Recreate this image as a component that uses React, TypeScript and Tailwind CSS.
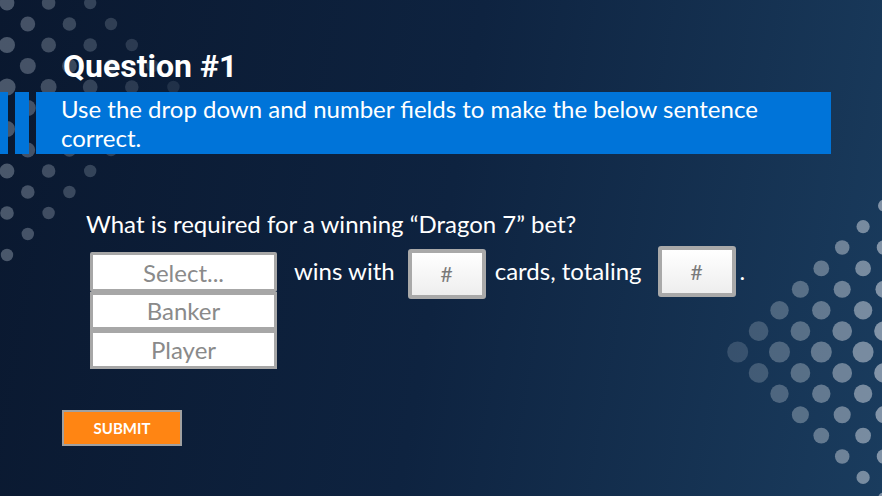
import React from "react";

type Dot = { x: number; y: number; r: number; o: number };

// left cluster: diamond hugging the left edge
const leftDots: Dot[] = [];
for (let i = 0; i <= 8; i++) {
  for (let j = -8; j <= 8; j++) {
    if (i + Math.abs(j) > 8 || (i + j) % 2 !== 0) continue;
    leftDots.push({
      x: 7 + 20.8 * i,
      y: 87 + 21 * j,
      r: 8.6 - 0.3 * (i + Math.abs(j)),
      o: 0.42 - 0.035 * i,
    });
  }
}

// right cluster: diamond pointing left, brighter towards the edge
const rightDots: Dot[] = [];
for (let i = 0; i <= 7; i++) {
  for (let j = -7; j <= 7; j++) {
    if (i + Math.abs(j) > 7 || Math.abs(i + j) % 2 !== 1) continue;
    rightDots.push({
      x: 884 - 20.9 * i,
      y: 352 + 20.9 * j,
      r: 10.5 - 0.65 * Math.abs(j),
      o: 0.62 - 0.06 * i,
    });
  }
}

function Dots() {
  return (
    <svg className="absolute inset-0 pointer-events-none" width="882" height="496">
      {leftDots.map((d, k) => (
        <circle key={"l" + k} cx={d.x} cy={d.y} r={d.r} fill="#a3afbd" opacity={d.o} />
      ))}
      {rightDots.map((d, k) => (
        <circle key={"r" + k} cx={d.x} cy={d.y} r={d.r} fill="#c3ccd6" opacity={d.o} />
      ))}
    </svg>
  );
}

function NumberBox({ className }: { className: string }) {
  return (
    <div
      className={`w-[78px] border-[4px] border-[#a9a9a9] rounded-[3px] bg-gradient-to-b from-white to-[#eeeeee] flex items-center justify-center text-[21px] text-[#7a7a7a] ${className}`}
    >
      #
    </div>
  );
}

export default function App() {
  return (
    <div className="relative w-[882px] h-[496px] overflow-hidden bg-[linear-gradient(100deg,#0a182f_0%,#0e2340_50%,#1a3c5e_100%)] font-[Lato,sans-serif]">
      <Dots />

      <div className="relative flex flex-col">
        {/* Title */}
        <h1 className="pt-[48px] pl-[63px] text-[32px] leading-[36px] font-bold text-white font-[Roboto,sans-serif]">
          Question #1
        </h1>

        {/* Instruction bar */}
        <div className="mt-[8px] flex h-[62px]">
          <div className="w-[8px] bg-[#0074d9]" />
          <div className="w-[14px] ml-[7px] bg-[#0074d9]" />
          <div className="w-[795px] ml-[7px] bg-[#0074d9] pl-[25px] pr-[40px] pt-[2px] text-[24px] leading-[29px] text-white">
            Use the drop down and number fields to make the below sentence correct.
          </div>
        </div>

        {/* Question */}
        <p className="mt-[56px] pl-[86px] text-[24px] leading-[28px] text-white">
          What is required for a winning “Dragon 7” bet?
        </p>

        {/* Answer sentence */}
        <div className="mt-[8px] pl-[90px] flex items-start text-[24px] leading-[28px] text-white">
          <div className="mt-[6px] w-[187px] flex flex-col text-[24px] text-[#8a8a8a] text-center">
            <div className="h-[40px] border-[3px] border-[#a7a7a7] rounded-[2px] bg-white leading-[33px] pt-[1px]">
              Select...
            </div>
            <div className="h-[38px] border-[3px] border-[#a7a7a7] bg-white leading-[32px]">Banker</div>
            <div className="h-[39px] border-[3px] border-[#a7a7a7] bg-white leading-[33px]">Player</div>
          </div>
          <span className="ml-[17px] mt-[11px]">wins with</span>
          <NumberBox className="ml-[13px] mt-[3px] h-[50px]" />
          <span className="ml-[9px] mt-[11px]">cards, totaling</span>
          <NumberBox className="ml-[16px] h-[51px]" />
          <span className="ml-[4px] mt-[11px]">.</span>
        </div>

        {/* Submit */}
        <button className="mt-[41px] ml-[62px] w-[120px] h-[36px] border-2 border-[#a0a0a0] bg-[#ff8513] text-white text-[15px] font-bold">
          SUBMIT
        </button>
      </div>
    </div>
  );
}
